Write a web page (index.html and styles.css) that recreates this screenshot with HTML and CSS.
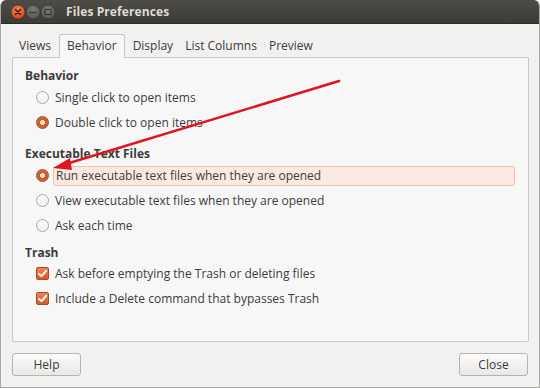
FILE: index.html
```html
<!DOCTYPE html>
<html>
<head>
<meta charset="utf-8">
<link rel="stylesheet" href="styles.css">
</head>
<body>
<div class="window">
  <div class="titlebar">
    <div class="controls">
      <svg width="46" height="16" viewBox="0 0 46 16">
        <defs>
          <radialGradient id="gc" cx="50%" cy="35%" r="60%">
            <stop offset="0" stop-color="#f5875a"/>
            <stop offset="1" stop-color="#d9481b"/>
          </radialGradient>
          <radialGradient id="gg" cx="50%" cy="35%" r="60%">
            <stop offset="0" stop-color="#7d7b75"/>
            <stop offset="1" stop-color="#5a5954"/>
          </radialGradient>
        </defs>
        <circle cx="8" cy="8" r="7" fill="url(#gc)" stroke="#3a2a22" stroke-width="0.6"/>
        <path d="M5.5 5.5 L10.5 10.5 M10.5 5.5 L5.5 10.5" stroke="#4a1d0c" stroke-width="1.6" stroke-linecap="round"/>
        <circle cx="23" cy="8" r="7" fill="url(#gg)" stroke="#33322e" stroke-width="0.6"/>
        <path d="M19.5 8.5 H26.5" stroke="#3b3a36" stroke-width="1.6"/>
        <circle cx="38" cy="8" r="7" fill="url(#gg)" stroke="#33322e" stroke-width="0.6"/>
        <rect x="35" y="5.5" width="6" height="5" fill="none" stroke="#3b3a36" stroke-width="1.3"/>
      </svg>
    </div>
    <div class="title">Files Preferences</div>
  </div>
  <div class="content">
    <div class="tabs">
      <div class="tab">Views</div>
      <div class="tab active">Behavior</div>
      <div class="tab">Display</div>
      <div class="tab">List Columns</div>
      <div class="tab">Preview</div>
    </div>
    <div class="page">
      <div class="heading">Behavior</div>
      <div class="row"><span class="radio"></span><span class="label">Single click to open items</span></div>
      <div class="row"><span class="radio on"></span><span class="label">Double click to open items</span></div>

      <div class="heading gap-lg">Executable Text Files</div>
      <div class="row"><span class="radio on"></span><span class="label hl">Run executable text files when they are opened</span></div>
      <div class="row"><span class="radio"></span><span class="label">View executable text files when they are opened</span></div>
      <div class="row"><span class="radio"></span><span class="label">Ask each time</span></div>

      <div class="heading gap-sm">Trash</div>
      <div class="row"><span class="check"><svg width="13" height="13" viewBox="0 0 13 13"><path d="M3 6.8 L5.4 9.2 L10.2 3.8" fill="none" stroke="#fff" stroke-width="1.9" stroke-linecap="round" stroke-linejoin="round"/></svg></span><span class="label">Ask before emptying the Trash or deleting files</span></div>
      <div class="row"><span class="check"><svg width="13" height="13" viewBox="0 0 13 13"><path d="M3 6.8 L5.4 9.2 L10.2 3.8" fill="none" stroke="#fff" stroke-width="1.9" stroke-linecap="round" stroke-linejoin="round"/></svg></span><span class="label">Include a Delete command that bypasses Trash</span></div>
    </div>
    <div class="buttons">
      <button class="btn">Help</button>
      <button class="btn">Close</button>
    </div>
  </div>
</div>
<svg class="arrow" width="540" height="388" viewBox="0 0 540 388">
  <line x1="339" y1="81" x2="66" y2="164" stroke="#e0161e" stroke-width="2.6" stroke-linecap="round"/>
  <polygon points="53,168 70,158 72,170" fill="#e0161e"/>
</svg>
</body>
</html>
```
FILE: styles.css
```css
* { box-sizing: border-box; }
html, body {
  margin: 0;
  padding: 0;
  background: #ffffff;
  width: 540px;
  height: 388px;
  overflow: hidden;
}
body {
  position: relative;
  font-family: "Open Sans", "DejaVu Sans", sans-serif;
  font-size: 12px;
  color: #3c3c3c;
}
.window {
  width: 540px;
  height: 388px;
  display: flex;
  flex-direction: column;
  background: #f2f1f0;
  border: 1px solid #a8a7a4;
  border-top: none;
  border-radius: 6px 6px 0 0;
  overflow: hidden;
}
.titlebar {
  height: 24px;
  flex: none;
  display: flex;
  align-items: center;
  background: linear-gradient(#4d4c47, #3c3b37);
  border-bottom: 1px solid #2c2b28;
  padding-left: 9px;
}
.controls { display: flex; align-items: center; height: 16px; }
.controls svg { display: block; }
.title {
  margin-left: 10px;
  color: #dfdbd2;
  font-weight: bold;
  font-size: 12px;
  letter-spacing: 0.1px;
}
.content {
  flex: 1;
  display: flex;
  flex-direction: column;
  padding: 9px 10px 0 11px;
}
.tabs {
  display: flex;
  align-items: flex-end;
  height: 24px;
  padding-left: 1px;
}
.tab {
  height: 23px;
  line-height: 24px;
  padding: 0 6px;
  font-size: 12px;
  color: #3c3c3c;
}
.tab.active {
  height: 24px;
  line-height: 22px;
  background: #f7f7f7;
  border: 1px solid #c9c8c5;
  border-bottom: none;
  border-radius: 3px 3px 0 0;
  margin: 0 2px;
  padding: 0 7px;
  position: relative;
  top: 1px;
}
.page {
  height: 285px;
  background: #f7f7f7;
  border: 1px solid #c9c8c5;
  border-radius: 0 0 2px 2px;
  padding: 7px 12px 0 12px;
  display: flex;
  flex-direction: column;
}
.heading {
  height: 20px;
  line-height: 22px;
  font-weight: bold;
  font-size: 12px;
}
.heading.gap-lg { margin-top: 8px; }
.heading.gap-sm { margin-top: 4px; height: 19px; line-height: 21px; }
.row {
  height: 25px;
  display: flex;
  align-items: center;
  padding-left: 11px;
  font-size: 12px;
}
.radio {
  width: 13px;
  height: 13px;
  flex: none;
  border-radius: 50%;
  background: linear-gradient(#ffffff, #f0efee);
  border: 1px solid #a9a8a5;
  margin-right: 4px;
}
.radio.on {
  border: 1px solid #a84a22;
  background: radial-gradient(circle at 50% 50%, #fbe3d6 0 2.2px, #c9532a 2.8px, #e9774a 100%);
}
.check {
  width: 13px;
  height: 13px;
  flex: none;
  border-radius: 2px;
  background: linear-gradient(#ef8252, #d8592b);
  border: 1px solid #a84a22;
  margin-right: 4px;
  display: flex;
  align-items: center;
  justify-content: center;
}
.check svg { display: block; margin: -1px; }
.label {
  padding-left: 2px;
  line-height: 18px;
}
.label.hl {
  flex: 1;
  height: 20px;
  line-height: 18px;
  background: #fbeae1;
  border: 1px solid #efc2ab;
  border-radius: 3px;
  margin-right: 1px;
}
.buttons {
  display: flex;
  justify-content: space-between;
  margin-top: 11px;
  padding-right: 1px;
}
.btn {
  width: 69px;
  height: 23px;
  font-family: "Open Sans", "DejaVu Sans", sans-serif;
  font-size: 12px;
  color: #3c3c3c;
  background: linear-gradient(#fbfbfb, #e9e8e6);
  border: 1px solid #b5b4b1;
  border-radius: 3px;
  padding: 0;
}
.arrow {
  position: absolute;
  left: 0;
  top: 0;
  pointer-events: none;
}
```
